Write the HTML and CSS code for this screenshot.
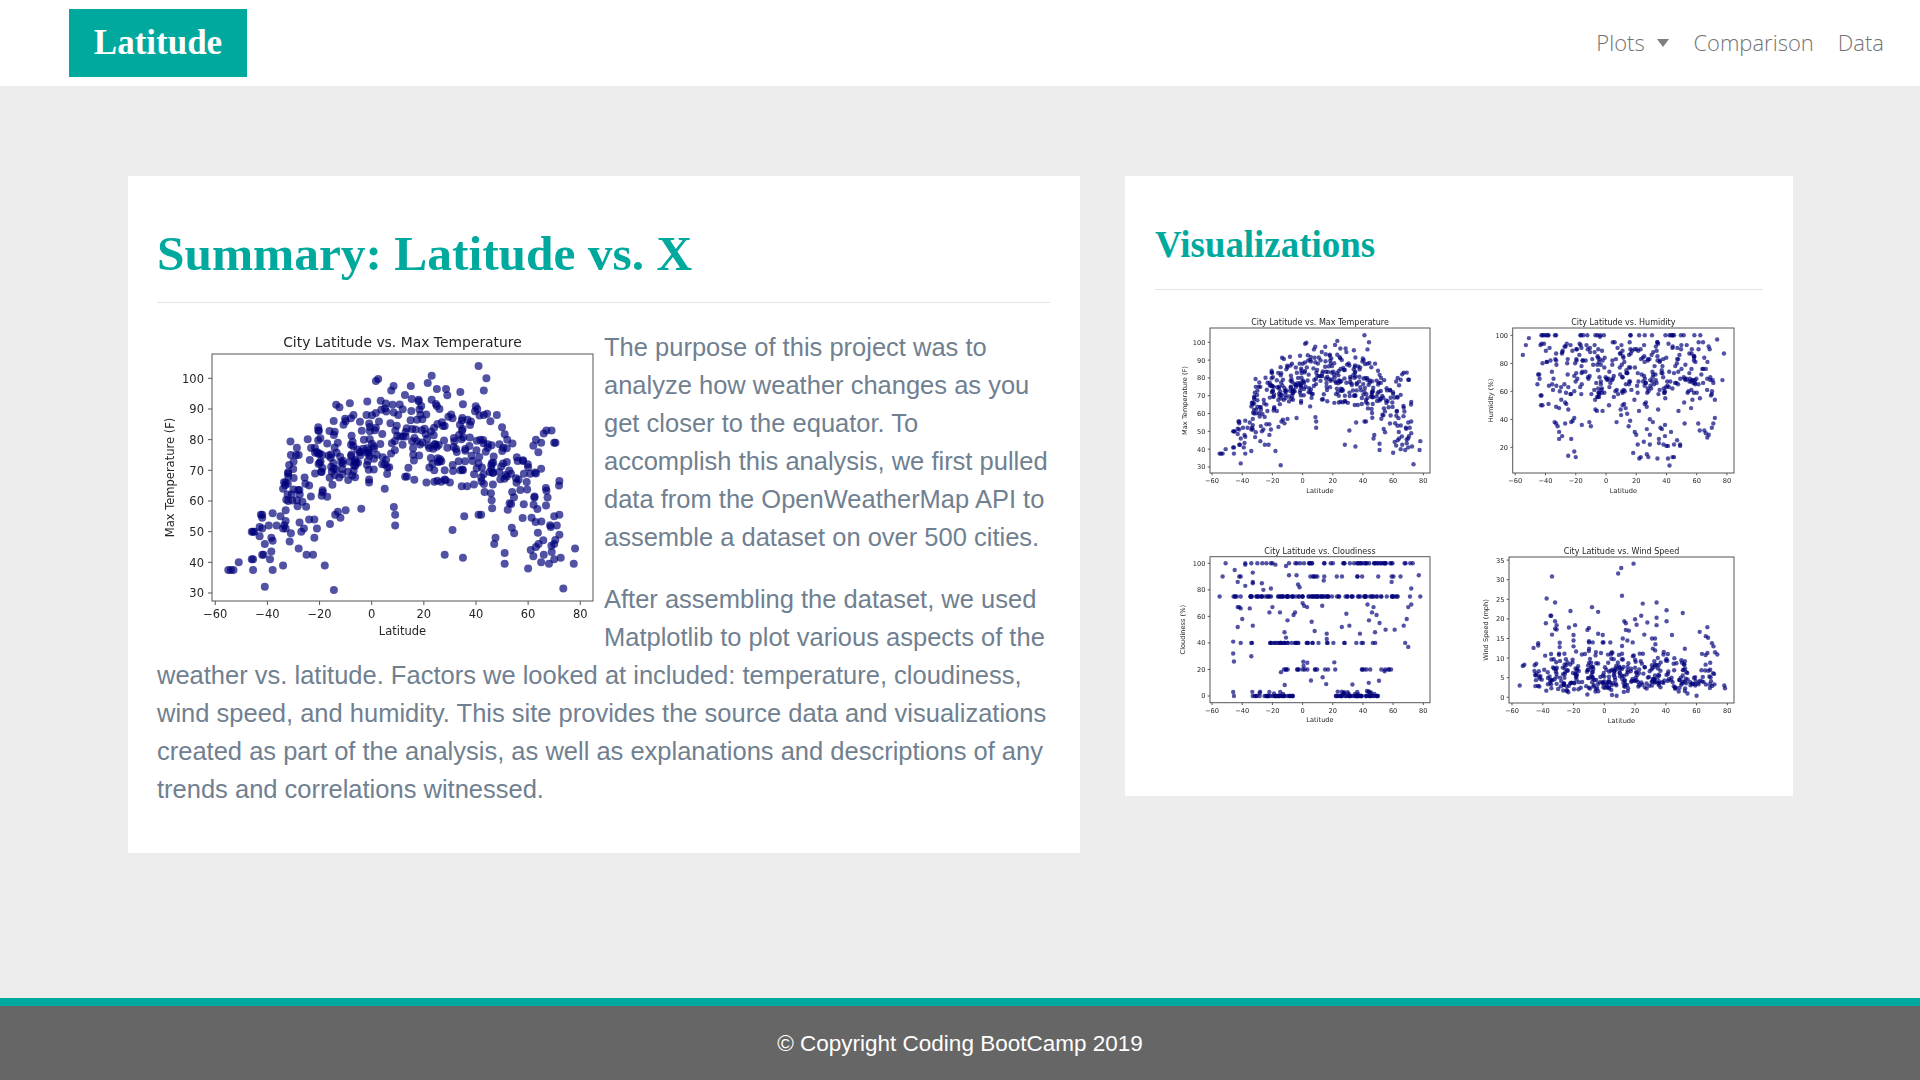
FILE: index.html
```html
<!DOCTYPE html>
<html>
<head>
  <title>Latitude</title>
  <link rel="stylesheet" href="styles.css">
</head>
<body>
  <nav class="navbar">
    <a class="brand" href="#">Latitude</a>
    <ul class="nav-links">
      <li><a href="#">Plots <span class="caret"></span></a></li>
      <li><a href="#">Comparison</a></li>
      <li><a href="#">Data</a></li>
    </ul>
  </nav>
  <main class="content">
    <section class="card card-summary">
      <h1 class="summary-title">Summary: Latitude vs. X</h1>
      <hr>
      <svg class="chart chart-main" id="chart-temp-large" width="439" height="323"></svg>
      <p>The purpose of this project was to analyze how weather changes as you get closer to the equator. To accomplish this analysis, we first pulled data from the OpenWeatherMap API to assemble a dataset on over 500 cities.</p>
      <p class="last">After assembling the dataset, we used Matplotlib to plot various aspects of the weather vs. latitude. Factors we looked at included: temperature, cloudiness, wind speed, and humidity. This site provides the source data and visualizations created as part of the analysis, as well as explanations and descriptions of any trends and correlations witnessed.</p>
    </section>
    <section class="card card-visuals">
      <h2 class="visuals-title">Visualizations</h2>
      <hr>
      <div class="plot-grid">
        <svg class="chart chart-small" id="chart-temp" width="305" height="230"></svg>
        <svg class="chart chart-small" id="chart-humidity" width="305" height="230"></svg>
        <svg class="chart chart-small" id="chart-cloud" width="305" height="230"></svg>
        <svg class="chart chart-small" id="chart-wind" width="305" height="230"></svg>
      </div>
    </section>
  </main>
  <footer class="footer">© Copyright Coding BootCamp 2019</footer>
  <script src="charts.js"></script>
</body>
</html>
```

FILE: styles.css
```css
* {
  box-sizing: border-box;
}
body {
  margin: 0;
  min-height: 100vh;
  display: flex;
  flex-direction: column;
  background: #ededed;
  font-family: "Liberation Sans", Arial, sans-serif;
  color: #708090;
}
a {
  text-decoration: none;
}
.navbar {
  height: 86px;
  flex-shrink: 0;
  background: #fff;
  display: flex;
  align-items: center;
  justify-content: space-between;
  padding: 0 36px 0 69px;
}
.brand {
  width: 178px;
  height: 68px;
  background: #00a99d;
  color: #fff;
  font-family: "Liberation Serif", Georgia, serif;
  font-weight: bold;
  font-size: 35px;
  display: flex;
  align-items: center;
  justify-content: center;
}
.nav-links {
  display: flex;
  gap: 24px;
  list-style: none;
  margin: 0 0 2px;
  padding: 0;
}
.nav-links a {
  color: #737373;
  font-family: "Open Sans", sans-serif;
  font-weight: 300;
  font-size: 22px;
}
.caret {
  display: inline-block;
  margin-left: 7px;
  vertical-align: 4px;
  border-top: 8px solid #7f7f7f;
  border-left: 6.5px solid transparent;
  border-right: 6.5px solid transparent;
}
.content {
  width: 100%;
  padding: 0 127px 0 128px;
  margin-top: 90px;
  display: flex;
  align-items: flex-start;
  justify-content: space-between;
}
.card {
  background: #fff;
  padding: 30px;
}
.card-summary {
  width: 952px;
  padding-left: 29px;
  padding-right: 30px;
  padding-bottom: 45px;
}
.card-visuals {
  width: 668px;
  padding-bottom: 26px;
}
.summary-title,
.visuals-title {
  margin: 0;
  color: #00a99d;
  font-family: "Liberation Serif", Georgia, serif;
  font-weight: bold;
}
.summary-title {
  font-size: 49.4px;
  line-height: 54px;
  padding-top: 21px;
  padding-bottom: 21px;
}
.visuals-title {
  font-size: 36.9px;
  line-height: 40px;
  padding-top: 19px;
  padding-bottom: 24px;
}
hr {
  border: 0;
  border-top: 1px solid rgba(0, 0, 0, .1);
  margin: 0 0 25px;
}
.card-visuals hr {
  margin-bottom: 20px;
}
p {
  margin: 0 0 24px;
  font-size: 25.5px;
  line-height: 38px;
}
p.last {
  margin-bottom: 0;
}
.chart {
  display: block;
  font-family: "DejaVu Sans", sans-serif;
  fill: #262626;
}
.chart-main {
  float: left;
  margin-top: -1px;
  margin-right: 8px;
  filter: blur(.35px);
}
.chart-small {
  filter: blur(.45px);
}
.plot-grid {
  display: grid;
  grid-template-columns: 305px 305px;
  grid-auto-rows: 230px;
}
.frame {
  fill: none;
  stroke: #555;
}
.tick {
  stroke: #555;
}
.dot {
  fill: #00007a;
  fill-opacity: .68;
}
.footer {
  margin-top: auto;
  height: 82px;
  flex-shrink: 0;
  padding-top: 2px;
  background: #666;
  border-top: 8px solid #00a99d;
  color: #fff;
  font-size: 22.5px;
  display: flex;
  align-items: center;
  justify-content: center;
}
```

FILE: charts.js
```js
const NS = "http://www.w3.org/2000/svg";

// small seeded random so every load draws the same cloud of cities
function makeRandom(seed) {
  return function () {
    seed = (seed + 0x6d2b79f5) | 0;
    let t = Math.imul(seed ^ (seed >>> 15), 1 | seed);
    t = (t + Math.imul(t ^ (t >>> 7), 61 | t)) ^ t;
    return ((t ^ (t >>> 14)) >>> 0) / 4294967296;
  };
}
const rnd = makeRandom(1907);
function gauss() {
  return (rnd() + rnd() + rnd() + rnd() - 2) * 1.7;
}
function randomLat() {
  const r = rnd();
  if (r < 0.36) return -46 + rnd() * 46;
  if (r < 0.92) return rnd() * 60;
  return 58 + rnd() * 14;
}
function between(a, b) {
  return a + rnd() * (b - a);
}

// points read off the original plots
const tempPoints = [[-55,37.5],[-54,37.5],[-53,37.5],[-51,40],[-46,41],[-45.5,41],[-45.5,37.5],[-46,50],[-45.5,50],[-45,50],[-43,51.5],[-43,48.5],[-42.5,55.5],[-42,55.5],[-42,54.5],[-42,51],[-42,42.5],[-41.5,42.5],[-41,32],[-41,46],[-39.5,52],[-39,41],[-38.5,48],[-38.5,43.5],[-38,47],[-38,37.5],[-38,56],[-36.5,52],[-35,55],[-34,39],[-34,51],[-33,53.5],[-33,51],[-33,57],[-34,64],[-33,66],[-32,60],[-32,68],[-31,49.5],[-31,75],[-29,75],[-28,75],[-28,44.5],[-27,50],[-26,51],[-25,42.5],[-22.5,42.5],[-24,54],[-22,54],[-22,48],[-21,51],[-18,39],[-14.5,31],[-16,52.5],[-13,56.5],[-12,54.5],[-14,55.5],[-10,57],[-4,57.5],[-20.5,83],[-20.5,84],[-21,76],[-20,75.5],[-19,75],[8.5,58],[9,55.5],[9,52],[28,42.5],[35,41.5],[31,50.5],[35.5,55],[41,55.5],[42,55.5],[41,104],[44,100],[43,96],[23,100.8],[21.5,98.5],[25,96.5],[28.5,96.5],[29,94.5],[34,95.5],[35,91.5],[15,97.5],[7.5,96],[18,93],[18,92.5],[19,91],[23,93],[25,91],[26,90],[40.5,90],[43,88],[48,88],[50,84],[52,80],[49,78.5],[73.5,31.5],[78,44.5],[77.5,39.5],[72.5,41.5],[70,41],[68,39.5],[66,42.5],[65,40],[63,45],[61,44],[60,38],[62,42],[64,46],[70,46],[72,49],[71,52],[72,55.5],[70,55],[72,66.5],[70.5,79],[70,79],[69,83],[67,83],[66,82],[65,79],[62,78],[63,80],[65,70.5],[63,69],[60,71],[58,73],[56,73],[51,39.5],[51,43],[47,46],[47.5,48],[-3,80],[-2,88],[-7,88],[-8,87],[-10,86],[-13,79],[12,81],[13,81],[11,81],[4,72],[5,72],[6,71],[-1,67],[-1,66],[5,64],[13.5,68],[21,66],[24,70],[28,70],[28,67],[30,66],[34,70],[35,70]];
const humidPoints = [[-55,86],[-53,93],[-51,98],[-42,100],[-41,100],[-38,100],[-33,100],[-15,100],[-7,100],[-4,99],[-43,50],[-42,50],[-38,51],[-33,49],[-31,48],[-34,38],[-33,37],[-32,35],[-31,31],[-31,26],[-29,28],[-27,37],[-27,52],[-25,14],[-21,17],[-20,13],[-23,26],[-23,38],[-22,39],[-21,41],[-16,36],[-11,38],[-10,35],[-7,47],[-6,46],[2,50],[7,38],[8,58],[10,43],[11,50],[13,48],[14,44],[15,35],[16,39],[18,16],[19,31],[20,29],[21,22],[22,12],[23,13],[25,24],[27,15],[28,13],[29,22],[27,33],[29,29],[29,40],[31,38],[34,12],[35,26],[35,23],[36,34],[37,33],[38,22],[39,28],[39,36],[40,21],[41,21],[41,12],[42,7],[43,31],[44,13],[45,13],[45,22],[47,25],[49,22],[49,21],[52,37],[61,37],[62,32],[65,32],[66,30],[67,27],[68,29],[70,34],[71,37],[72,41],[73.5,97],[78,87],[77,68],[72,54],[71,66],[70,58],[69,70]];
const cloudPoints = [[-55,75],[-53,90],[-51,100],[-46,41],[-46,32],[-45.5,26],[-46,3],[-45.5,0],[-45,95],[-43,86],[-41,90],[-42,90],[-43,52],[-41,40],[-40,58],[-38,83],[-38,100],[-38,99],[-35,66],[-34,40],[-33.5,40],[-34,30],[-33,53],[-33,93],[-33,86],[-33,85],[-30,100],[-27,85],[-26,80],[-24,100],[-21,100],[-20,100],[-18,99],[-21,81],[-22,63],[-20,67],[-15,63],[-12,48],[-11,44],[-10,57],[-9,91],[-11,98],[-9,100],[-6,61],[-5,63],[-4,91],[-3,84],[-2,82],[0,70],[1,68],[3,67],[6,56],[8,49],[13,68],[14,87],[16,47],[16,43],[26,52],[29,62],[31,53],[38,47],[43,69],[46,63],[47,67],[44,57],[49,61],[51,55],[48,48],[55,50],[61,50],[67,53],[69,58],[70,67],[70,37],[72,69],[72,81],[77,91],[78,75],[73,100],[59,86],[-41,66],[-42,67],[-43,67]];
const windPoints = [[-55,3],[-53,8],[-52,8.3],[-46,12.6],[-34,30.8],[-37.5,25.2],[-32,24.2],[-38,18.9],[-35,20.8],[-34.5,20.8],[-32,19.4],[-31,18.4],[-32,17.5],[-31,17.3],[-34,16],[-29,13.9],[-29,12.8],[-22,22],[-23,17.8],[-19,18.4],[-20,15.9],[-20,14.5],[-20,13],[-11,17.2],[-10,17.7],[-10,14.3],[-8,23],[-4,21.8],[-4,16.2],[-1,15.9],[-43,13.8],[-43,13.2],[9,31.6],[11,33],[19,34.1],[11.5,25.9],[25,23.9],[34,24.2],[40.5,22.2],[51,21.5],[24,20.8],[20,19.9],[13,19.4],[14,18.9],[21,18.5],[34,20.3],[34,18.4],[40.5,19.4],[28,19.1],[16,17],[14,17.2],[62,16.7],[67,17.9],[67.5,15.2],[66,15.6],[44,15.9],[26,16],[31,15],[33,15],[12,15],[15,14.5],[73.5,10.9],[70,13.8],[71,13],[72,11.5],[78,3],[78.5,2.3],[60,0.4],[8,0.4],[-11,0.7],[5,0.6]];

for (let i = 0; i < 340; i++) {
  let lat = randomLat();
  if (lat < -34) lat = between(-32, 8);
  if (lat > 58 && rnd() < 0.3) lat = between(38, 58);
  const peak = 82 - 0.0095 * (lat - 15) * (lat - 15);
  let v = peak + gauss() * 8;
  if (lat > -15 && lat < 32 && v < 66) v = 66 + rnd() * 10;
  tempPoints.push([lat, v]);
}
for (let i = 0; i < 340; i++) {
  const lat = randomLat();
  let v = 58 + rnd() * 38;
  if (rnd() < 0.1) v = 100;
  if (rnd() < 0.1) v = 45 + rnd() * 15;
  humidPoints.push([lat, Math.round(v)]);
}
const cloudRows = [100, 100, 100, 90, 75, 75, 75, 75, 40, 40, 20, 20, 0, 0, 0, 0, 0];
for (let i = 0; i < 340; i++) {
  let lat = randomLat();
  let v = cloudRows[Math.floor(rnd() * cloudRows.length)];
  // the bottom row sits in two bands, the 20 and 40 rows in gaps
  if (v === 0) {
    lat = rnd() < 0.42 ? between(-35, -5) : between(22, 52);
    if (rnd() < 0.2) v = 1 + rnd() * 3;
  }
  if (v === 20) {
    lat = rnd() < 0.7 ? between(-16, 24) : between(30, 62);
    if (rnd() < 0.35) v = 8 + rnd() * 18;
  }
  if (v === 40 && lat < -22) lat = between(-22, -8);
  if (v === 90 && lat < 0) v = 75;
  if (v === 100 && lat < -5 && rnd() < 0.6) v = 75;
  cloudPoints.push([lat, v]);
}
for (let i = 0; i < 380; i++) {
  const lat = randomLat();
  const v = 0.8 + Math.abs(gauss()) * 4.8 + rnd() * 3;
  windPoints.push([lat, Math.min(v, 14)]);
}

function add(svg, tag, attrs, text) {
  const el = document.createElementNS(NS, tag);
  for (const key in attrs) el.setAttribute(key, attrs[key]);
  if (text !== undefined) el.textContent = text;
  svg.appendChild(el);
  return el;
}

function drawChart(o) {
  const svg = document.getElementById(o.id);
  const s = o.scale;
  const px = (v) => o.x0 + v * o.xs;
  const py = (v) => o.y0 - v * o.ys;
  const tickFont = 11.5 * s;
  const mid = (o.box[0] + o.box[1]) / 2;
  const cy = (o.box[2] + o.box[3]) / 2;

  o.points.forEach((p) => {
    add(svg, "circle", { class: "dot", cx: px(p[0]), cy: py(p[1]), r: o.r });
  });
  add(svg, "rect", { class: "frame", x: o.box[0], y: o.box[2], width: o.box[1] - o.box[0], height: o.box[3] - o.box[2] });

  for (let v = -60; v <= 80; v += 20) {
    add(svg, "line", { class: "tick", x1: px(v), x2: px(v), y1: o.box[3], y2: o.box[3] + 4 * s });
    const label = v < 0 ? "\u2212" + -v : "" + v;
    add(svg, "text", { x: px(v), y: o.box[3] + 17 * s, "text-anchor": "middle", "font-size": tickFont }, label);
  }
  o.yTicks.forEach((v) => {
    add(svg, "line", { class: "tick", x1: o.box[0] - 4 * s, x2: o.box[0], y1: py(v), y2: py(v) });
    add(svg, "text", { x: o.box[0] - 8 * s, y: py(v) + tickFont * 0.37, "text-anchor": "end", "font-size": tickFont }, v);
  });
  add(svg, "text", { x: mid, y: o.titleY, "text-anchor": "middle", "font-size": 13.9 * s }, o.title);
  add(svg, "text", { x: mid, y: o.box[3] + 34 * s, "text-anchor": "middle", "font-size": tickFont }, "Latitude");
  add(svg, "text", {
    x: 0, y: 0, "text-anchor": "middle", "font-size": tickFont,
    transform: "translate(" + o.labelX + " " + cy + ") rotate(-90)"
  }, o.yLabel);
}

const SMALL = 0.577;

drawChart({
  id: "chart-temp-large", scale: 1, r: 4, points: tempPoints,
  box: [55, 436, 27, 274], x0: 214.7, xs: 2.607, y0: 358, ys: 3.067,
  yTicks: [30, 40, 50, 60, 70, 80, 90, 100], titleY: 19.5,
  title: "City Latitude vs. Max Temperature", yLabel: "Max Temperature (F)", labelX: 17
});
drawChart({
  id: "chart-temp", scale: SMALL, r: 2.2, points: tempPoints,
  box: [55, 275, 18, 163], x0: 147.6, xs: 1.509, y0: 210.4, ys: 1.781,
  yTicks: [30, 40, 50, 60, 70, 80, 90, 100], titleY: 15,
  title: "City Latitude vs. Max Temperature", yLabel: "Max Temperature (F)", labelX: 32
});
drawChart({
  id: "chart-humidity", scale: SMALL, r: 2.2, points: humidPoints,
  box: [52.7, 274, 18, 163], x0: 146, xs: 1.512, y0: 165.3, ys: 1.4,
  yTicks: [20, 40, 60, 80, 100], titleY: 15,
  title: "City Latitude vs. Humidity", yLabel: "Humidity (%)", labelX: 33
});
drawChart({
  id: "chart-cloud", scale: SMALL, r: 2.2, points: cloudPoints,
  box: [55, 275, 16.7, 162.7], x0: 147.6, xs: 1.509, y0: 156, ys: 1.327,
  yTicks: [0, 20, 40, 60, 80, 100], titleY: 13.5,
  title: "City Latitude vs. Cloudiness", yLabel: "Cloudiness (%)", labelX: 30
});
drawChart({
  id: "chart-wind", scale: SMALL, r: 2.2, points: windPoints,
  box: [49, 274, 17, 163], x0: 144.3, xs: 1.538, y0: 157.3, ys: 3.92,
  yTicks: [0, 5, 10, 15, 20, 25, 30, 35], titleY: 13.5,
  title: "City Latitude vs. Wind Speed", yLabel: "Wind Speed (mph)", labelX: 28
});
```
